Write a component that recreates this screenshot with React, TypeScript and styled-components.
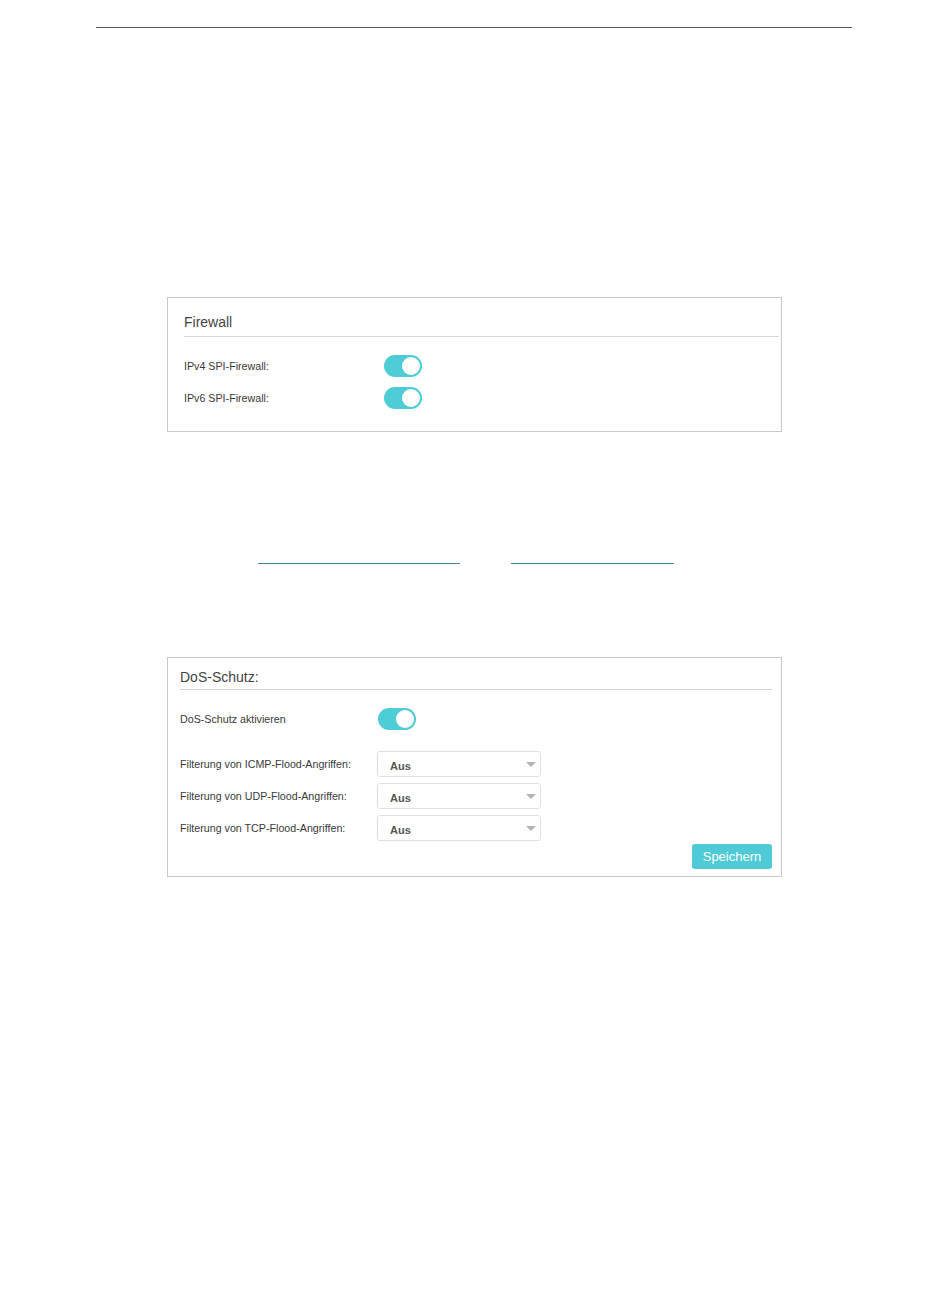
import styled, { createGlobalStyle } from "styled-components";

const GlobalStyle = createGlobalStyle`
  body {
    margin: 0;
    background: #ffffff;
    font-family: "Liberation Sans", Arial, sans-serif;
  }
`;

const Page = styled.div`
  width: 950px;
  min-height: 1290px;
  padding-top: 27px;
  box-sizing: border-box;
`;

const TopRule = styled.div`
  margin-left: 96px;
  width: 756px;
  height: 1px;
  background: #5a5a5a;
`;

const Panel = styled.div<{ $top: number; $pl: number; $pr: number; $pt: number; $pb: number }>`
  margin: ${(p) => p.$top}px 0 0 167px;
  width: 615px;
  box-sizing: border-box;
  border: 1px solid #c9c9c9;
  padding: ${(p) => `${p.$pt}px ${p.$pr}px ${p.$pb}px ${p.$pl}px`};
  display: flex;
  flex-direction: column;
`;

const PanelTitle = styled.div<{ $gap: number }>`
  font-size: 14px;
  line-height: 20px;
  color: #444;
  padding-bottom: ${(p) => p.$gap}px;
  border-bottom: 1px solid #d6d6d6;
`;

const Rows = styled.div<{ $top: number; $gap: number }>`
  margin-top: ${(p) => p.$top}px;
  display: flex;
  flex-direction: column;
  gap: ${(p) => p.$gap}px;
`;

const Row = styled.div`
  display: flex;
  align-items: center;
`;

const Label = styled.div<{ $w: number }>`
  width: ${(p) => p.$w}px;
  font-size: 10.7px;
  color: #3a3a3a;
`;

const Toggle = styled.div`
  position: relative;
  width: 38px;
  height: 22px;
  border-radius: 11px;
  background: #4ecdd6;
`;

const Knob = styled.div`
  position: absolute;
  top: 2px;
  right: 2px;
  width: 18px;
  height: 18px;
  border-radius: 50%;
  background: #ffffff;
`;

const Select = styled.div`
  position: relative;
  width: 164px;
  height: 26px;
  box-sizing: border-box;
  border: 1px solid #e0e0e0;
  border-radius: 3px;
  padding: 4px 0 0 12px;
  display: flex;
  align-items: center;
  font-size: 11px;
  font-weight: bold;
  color: #555;
`;

const Caret = styled.div`
  position: absolute;
  right: 4px;
  top: 10px;
  width: 0;
  height: 0;
  border-left: 5px solid transparent;
  border-right: 5px solid transparent;
  border-top: 5px solid #b5b5b5;
`;

const Footer = styled.div`
  display: flex;
  justify-content: flex-end;
  margin-top: 3px;
`;

const SaveButton = styled.button`
  width: 80px;
  height: 25px;
  border: none;
  border-radius: 3px;
  background: #4ecbd6;
  color: #ffffff;
  font-family: "Liberation Sans", Arial, sans-serif;
  font-size: 13px;
  padding: 0;
  cursor: pointer;
`;

const LinkRow = styled.div`
  margin: 131px 0 0 258px;
  display: flex;
  gap: 51px;
`;

const LinkLine = styled.div<{ $w: number }>`
  width: ${(p) => p.$w}px;
  height: 1px;
  background: #4d8997;
`;

const Switch = () => (
  <Toggle>
    <Knob />
  </Toggle>
);

const floods = ["ICMP", "UDP", "TCP"];

const App = () => {
  return (
    <>
      <GlobalStyle />
      <Page>
        <TopRule />
        <Panel $top={269} $pl={16} $pr={2} $pt={14} $pb={22}>
          <PanelTitle $gap={4}>Firewall</PanelTitle>
          <Rows $top={18} $gap={10}>
            <Row>
              <Label $w={200}>IPv4 SPI-Firewall:</Label>
              <Switch />
            </Row>
            <Row>
              <Label $w={200}>IPv6 SPI-Firewall:</Label>
              <Switch />
            </Row>
          </Rows>
        </Panel>
        <LinkRow>
          <LinkLine $w={202} />
          <LinkLine $w={163} />
        </LinkRow>
        <Panel $top={93} $pl={12} $pr={9} $pt={9} $pb={7}>
          <PanelTitle $gap={2}>DoS-Schutz:</PanelTitle>
          <Rows $top={18} $gap={0}>
            <Row>
              <Label $w={198}>DoS-Schutz aktivieren</Label>
              <Switch />
            </Row>
          </Rows>
          <Rows $top={21} $gap={6}>
            {floods.map((f) => (
              <Row key={f}>
                <Label $w={197}>Filterung von {f}-Flood-Angriffen:</Label>
                <Select>
                  Aus
                  <Caret />
                </Select>
              </Row>
            ))}
          </Rows>
          <Footer>
            <SaveButton>Speichern</SaveButton>
          </Footer>
        </Panel>
      </Page>
    </>
  );
};

export default App;
